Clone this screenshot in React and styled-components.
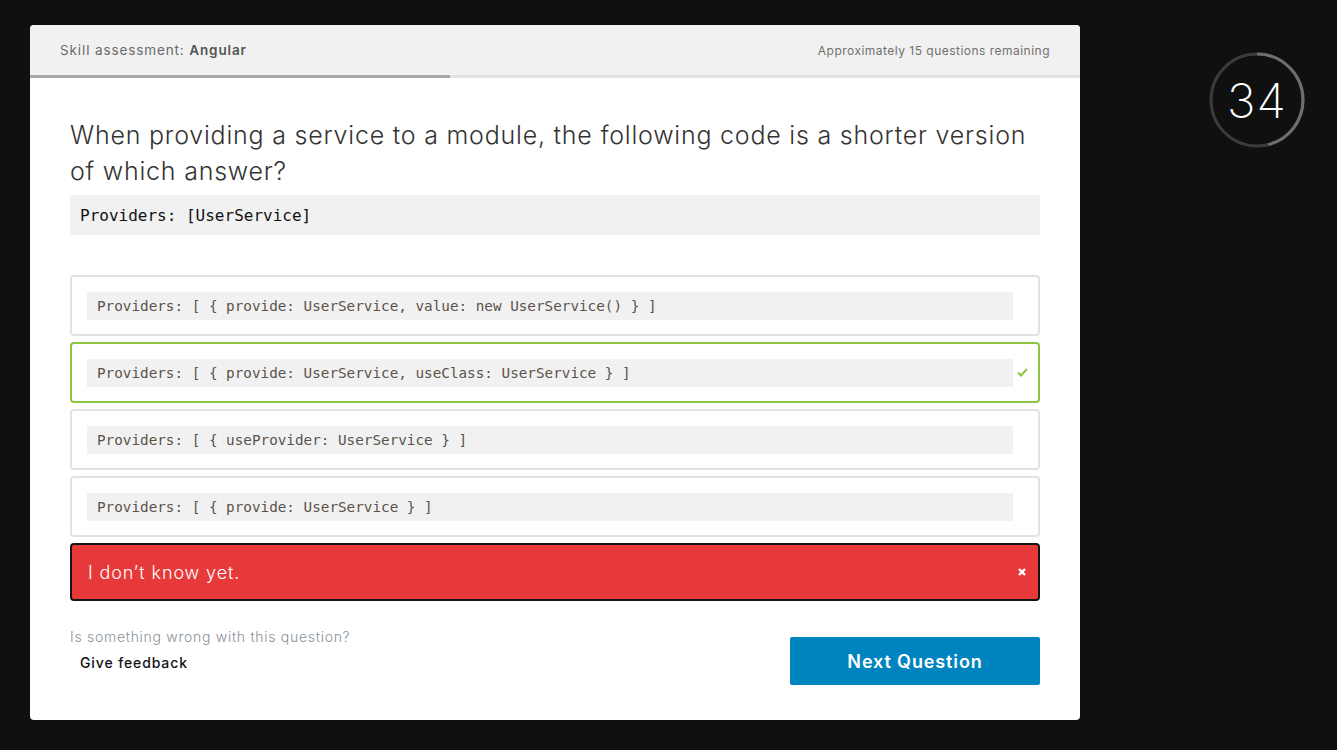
import React from "react";
import styled, { createGlobalStyle } from "styled-components";

const GlobalStyle = createGlobalStyle`
  html, body {
    margin: 0;
    padding: 0;
    background: #101010;
    font-family: Inter, "Open Sans", sans-serif;
    letter-spacing: 0.88px;
  }
`;

const options = [
  { code: "Providers: [ { provide: UserService, value: new UserService() } ]" },
  { code: "Providers: [ { provide: UserService, useClass: UserService } ]", correct: true },
  { code: "Providers: [ { useProvider: UserService } ]" },
  { code: "Providers: [ { provide: UserService } ]" },
];

const App = () => {
  return (
    <>
      <GlobalStyle />
      <Page>
        <Card>
          <Header>
            <span>
              Skill assessment: <strong>Angular</strong>
            </span>
            <small>Approximately 15 questions remaining</small>
          </Header>
          <Progress>
            <div style={{ width: "40%" }} />
          </Progress>
          <Body>
            <Question>
              When providing a service to a module, the following code is a shorter version of which answer?
            </Question>
            <CodeBlock>Providers: [UserService]</CodeBlock>
            <Options>
              {options.map((o, i) => (
                <Option key={i} $correct={o.correct}>
                  <OptionCode>{o.code}</OptionCode>
                  <Mark>
                    {o.correct && (
                      <svg width="11" height="9" viewBox="0 0 11 9">
                        <polyline points="1,4.5 4,7.5 10,1" fill="none" stroke="#8cc63f" strokeWidth="2" />
                      </svg>
                    )}
                  </Mark>
                </Option>
              ))}
              <DontKnow>
                <span>I don’t know yet.</span>
                <Mark>
                  <svg width="8" height="8" viewBox="0 0 8 8">
                    <path d="M1 1L7 7M7 1L1 7" stroke="#fff" strokeWidth="2.4" />
                  </svg>
                </Mark>
              </DontKnow>
            </Options>
            <Footer>
              <Feedback>
                <p>Is something wrong with this question?</p>
                <button>Give feedback</button>
              </Feedback>
              <NextButton>Next Question</NextButton>
            </Footer>
          </Body>
        </Card>
        <Timer>
          <svg width="96" height="96" viewBox="0 0 96 96">
            <circle cx="48" cy="48" r="46" fill="none" stroke="#3b3b3b" strokeWidth="3" />
            <circle
              cx="48"
              cy="48"
              r="46"
              fill="none"
              stroke="#6e6e6e"
              strokeWidth="3"
              strokeDasharray={`${2 * Math.PI * 46 * 0.46} 1000`}
              transform="rotate(-90 48 48)"
            />
          </svg>
          <span>34</span>
        </Timer>
      </Page>
    </>
  );
};

const Page = styled.div`
  display: flex;
  align-items: flex-start;
  gap: 129px;
  padding: 25px 30px;
`;

const Card = styled.div`
  width: 1050px;
  background: #fff;
  border-radius: 4px;
  overflow: hidden;
`;

const Header = styled.div`
  height: 50px;
  background: #f1f1f1;
  display: flex;
  align-items: center;
  justify-content: space-between;
  padding: 0 30px;
  span {
    font-size: 13.5px;
    color: #6a6a6a;
    font-weight: 400;
    strong {
      color: #555;
      font-weight: 600;
    }
  }
  small {
    font-size: 12px;
    letter-spacing: 0.48px;
    color: #707070;
  }
`;

const Progress = styled.div`
  height: 3px;
  background: #e3e3e3;
  div {
    height: 100%;
    background: #a6a6a6;
  }
`;

const Body = styled.div`
  padding: 39px 40px 35px;
`;

const Question = styled.h1`
  margin: 0;
  font-size: 25px;
  line-height: 36px;
  font-weight: 300;
  letter-spacing: 0.78px;
  color: #333;
`;

const CodeBlock = styled.pre`
  margin: 6px 0 0;
  height: 40px;
  background: #f1f1f1;
  padding: 0 10px;
  display: flex;
  align-items: center;
  font-family: "DejaVu Sans Mono", monospace;
  font-size: 16px;
  letter-spacing: 0;
  color: #111;
`;

const Options = styled.div`
  margin-top: 40px;
  display: flex;
  flex-direction: column;
  gap: 6px;
`;

const Option = styled.div`
  height: 61px;
  box-sizing: border-box;
  border: 2px solid ${(p) => (p.$correct ? "#8cc63f" : "#e2e2e2")};
  border-radius: 4px;
  display: flex;
  align-items: center;
  padding: 0 7px 0 15px;
`;

const OptionCode = styled.code`
  flex: 1;
  height: 28px;
  display: flex;
  align-items: center;
  background: #f1f1f1;
  padding: 0 10px;
  font-family: "DejaVu Sans Mono", monospace;
  font-size: 14.3px;
  letter-spacing: 0;
  color: #5b534b;
  white-space: pre;
`;

const Mark = styled.div`
  width: 18px;
  display: flex;
  justify-content: center;
  align-items: center;
`;

const DontKnow = styled.div`
  height: 58px;
  box-sizing: border-box;
  background: #e8393a;
  border: 2px solid #151515;
  border-radius: 4px;
  display: flex;
  align-items: center;
  justify-content: space-between;
  padding: 0 0 0 16px;
  span {
    color: #fff;
    font-size: 18px;
    font-weight: 300;
  }
  ${Mark} {
    width: 32px;
  }
`;

const Footer = styled.div`
  margin-top: 27px;
  display: flex;
  justify-content: space-between;
  align-items: flex-start;
`;

const Feedback = styled.div`
  p {
    margin: 0;
    font-size: 14px;
    line-height: 18px;
    letter-spacing: 0.72px;
    color: #8a9199;
    font-weight: 300;
  }
  button {
    margin-top: 8px;
    padding: 0 10px;
    border: none;
    background: none;
    font-family: inherit;
    letter-spacing: inherit;
    font-size: 14px;
    line-height: 18px;
    font-weight: 500;
    color: #111;
  }
`;

const NextButton = styled.button`
  margin-top: 9px;
  width: 250px;
  height: 48px;
  border: none;
  border-radius: 2px;
  background: #0084c0;
  color: #fff;
  font-family: inherit;
  letter-spacing: inherit;
  font-size: 18px;
  font-weight: 600;
`;

const Timer = styled.div`
  margin-top: 27px;
  position: relative;
  width: 96px;
  height: 96px;
  span {
    position: absolute;
    inset: 0;
    display: flex;
    align-items: center;
    justify-content: center;
    color: #fff;
    font-size: 48px;
    font-weight: 200;
    letter-spacing: 1px;
  }
`;

export default App;
